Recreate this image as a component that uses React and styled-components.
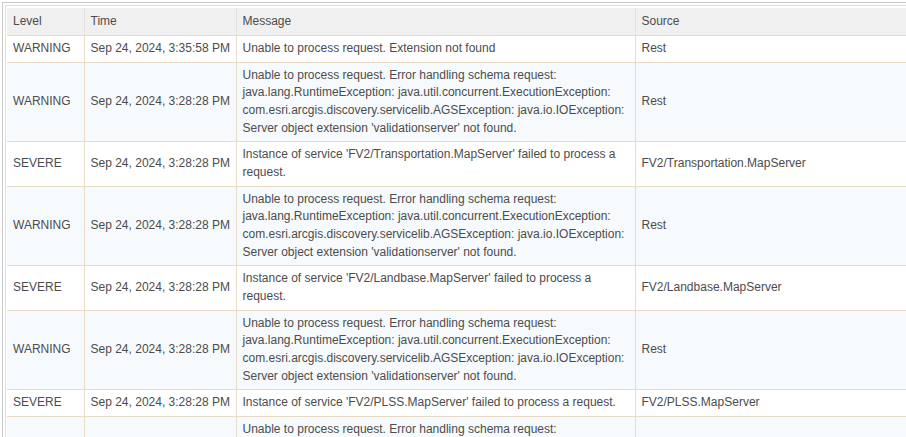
import React from 'react';
import styled, { createGlobalStyle } from 'styled-components';

const GlobalStyle = createGlobalStyle`
  html, body {
    margin: 0;
    padding: 0;
    background: #ffffff;
    overflow: hidden;
  }
  body {
    font-family: "Liberation Sans", Arial, sans-serif;
  }
`;

const Page = styled.div`
  padding: 2px 0 0 2px;
  width: 940px;
`;

const OuterFrame = styled.div`
  border-top: 1px solid #c9c9c9;
  border-left: 1px solid #c9c9c9;
  padding: 2px 0 0 2px;
`;

const InnerFrame = styled.div`
  border-top: 1px solid #dfdfdf;
  border-left: 1px solid #dfdfdf;
  padding: 2px 0 0 1px;
`;

const Table = styled.table`
  border-collapse: collapse;
  table-layout: fixed;
  width: 930px;
  font-size: 12px;
  color: #4c4c4c;
`;

const HeadCell = styled.th`
  background: #f0f0f0;
  font-weight: normal;
  text-align: left;
  padding: 5px 6px;
  line-height: 17px;
  border-bottom: 1px solid #e8dcc9;
  border-left: 1px solid #e4e0da;
  &:first-child {
    border-left: none;
  }
`;

const Row = styled.tr`
  background: ${({ $alt }) => ($alt ? '#f6fafd' : '#ffffff')};
`;

const Cell = styled.td`
  padding: 4px 6px;
  line-height: 17.67px;
  vertical-align: middle;
  white-space: ${({ $wrap }) => ($wrap ? 'normal' : 'nowrap')};
  overflow: hidden;
  border-bottom: 1px solid #e8dcc9;
  border-left: 1px solid #e8dcc9;
  &:first-child {
    border-left: none;
  }
`;

const schemaError =
  "Unable to process request. Error handling schema request: java.lang.RuntimeException: java.util.concurrent.ExecutionException: com.esri.arcgis.discovery.servicelib.AGSException: java.io.IOException: Server object extension 'validationserver' not found.";

const logs = [
  { level: 'WARNING', time: 'Sep 24, 2024, 3:35:58 PM', message: 'Unable to process request. Extension not found', source: 'Rest' },
  { level: 'WARNING', time: 'Sep 24, 2024, 3:28:28 PM', message: schemaError, source: 'Rest' },
  { level: 'SEVERE', time: 'Sep 24, 2024, 3:28:28 PM', message: "Instance of service 'FV2/Transportation.MapServer' failed to process a request.", source: 'FV2/Transportation.MapServer' },
  { level: 'WARNING', time: 'Sep 24, 2024, 3:28:28 PM', message: schemaError, source: 'Rest' },
  { level: 'SEVERE', time: 'Sep 24, 2024, 3:28:28 PM', message: "Instance of service 'FV2/Landbase.MapServer' failed to process a request.", source: 'FV2/Landbase.MapServer' },
  { level: 'WARNING', time: 'Sep 24, 2024, 3:28:28 PM', message: schemaError, source: 'Rest' },
  { level: 'SEVERE', time: 'Sep 24, 2024, 3:28:28 PM', message: "Instance of service 'FV2/PLSS.MapServer' failed to process a request.", source: 'FV2/PLSS.MapServer' },
  { level: 'WARNING', time: 'Sep 24, 2024, 3:28:28 PM', message: schemaError, source: 'Rest' },
];

export default function App() {
  return (
    <>
      <GlobalStyle />
      <Page>
        <OuterFrame>
          <InnerFrame>
            <Table>
              <colgroup>
                <col style={{ width: 77 }} />
                <col style={{ width: 152 }} />
                <col style={{ width: 399 }} />
                <col />
              </colgroup>
              <thead>
                <tr>
                  <HeadCell>Level</HeadCell>
                  <HeadCell>Time</HeadCell>
                  <HeadCell>Message</HeadCell>
                  <HeadCell>Source</HeadCell>
                </tr>
              </thead>
              <tbody>
                {logs.map((log, i) => (
                  <Row key={i} $alt={i % 2 === 1}>
                    <Cell>{log.level}</Cell>
                    <Cell>{log.time}</Cell>
                    <Cell $wrap>{log.message}</Cell>
                    <Cell>{log.source}</Cell>
                  </Row>
                ))}
              </tbody>
            </Table>
          </InnerFrame>
        </OuterFrame>
      </Page>
    </>
  );
}
